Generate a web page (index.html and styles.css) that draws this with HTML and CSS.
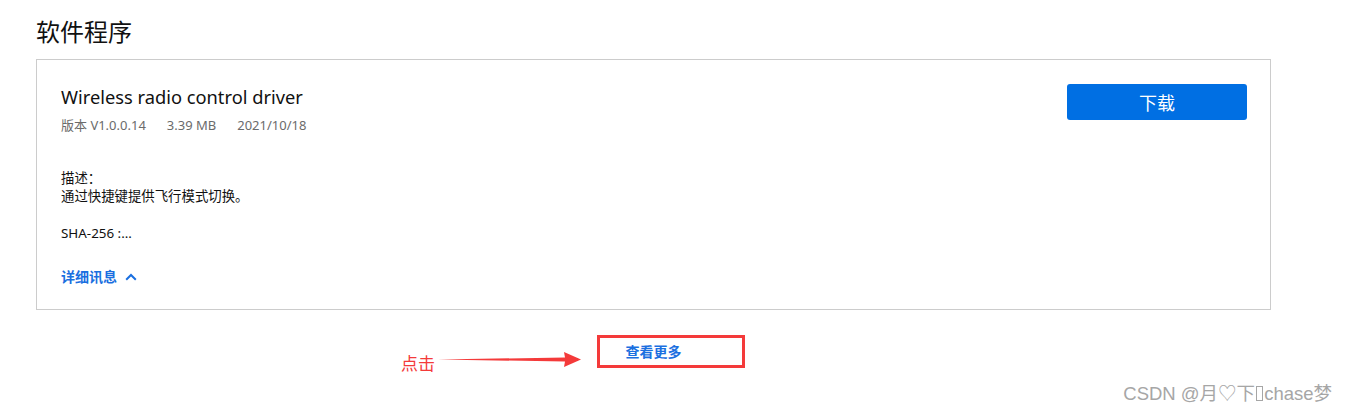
FILE: index.html
```html
<!DOCTYPE html>
<html lang="zh-CN">
<head>
<meta charset="utf-8">
<title>软件程序</title>
<link rel="stylesheet" href="styles.css">
</head>
<body>
<div class="page">
  <h2 class="section-title">软件程序</h2>
  <div class="card">
    <div class="card-head">
      <div class="info">
        <div class="name">Wireless radio control driver</div>
        <div class="meta"><span>版本 V1.0.0.14</span><span>3.39 MB</span><span>2021/10/18</span></div>
      </div>
      <button class="download">下载</button>
    </div>
    <div class="desc">
      <div>描述：</div>
      <div>通过快捷键提供飞行模式切换。</div>
    </div>
    <div class="sha">SHA-256 :...</div>
    <div class="details">详细讯息
      <svg class="chev" width="12" height="8" viewBox="0 0 12 8"><path d="M1.2 6.8 L6 2 L10.8 6.8" fill="none" stroke="#1a6fe0" stroke-width="2"/></svg>
    </div>
  </div>
  <div class="more-row">
    <span class="more">查看更多</span>
    <div class="annot">
      <span class="click">点击</span>
      <svg class="arrow" width="146" height="18" viewBox="0 0 146 18"><path d="M0 8.5 L127 6.5 L126 1 L143 8.5 L126 16 L127 10.5 Z" fill="#f43a3a"/></svg>
      <div class="redbox"></div>
    </div>
  </div>
  <div class="watermark">CSDN @月♡下<span class="tofu"></span>chase梦</div>
</div>
</body>
</html>
```
FILE: styles.css
```css
html, body {
  margin: 0;
  padding: 0;
  background: #fff;
}
body {
  font-family: "Noto Sans", "Noto Sans CJK SC", sans-serif;
  color: #222;
}
.page {
  position: relative;
  width: 1347px;
  height: 413px;
  padding: 0 0 0 36px;
  box-sizing: border-box;
}
.section-title {
  margin: 0;
  padding-top: 15px;
  height: 59px;
  box-sizing: border-box;
  font-size: 24px;
  line-height: 34px;
  font-weight: 400;
  color: #111;
}
.card {
  width: 1235px;
  box-sizing: border-box;
  border: 1px solid #cccccc;
  padding: 24px 23px 23px 24px;
}
.card-head {
  display: flex;
  justify-content: space-between;
  align-items: flex-start;
}
.name {
  font-size: 18.3px;
  line-height: 26px;
  color: #111;
}
.meta {
  margin-top: 5px;
  font-size: 13px;
  line-height: 20px;
  color: #6b6b6b;
  display: flex;
  gap: 21px;
}
.download {
  width: 180px;
  height: 36px;
  border: none;
  border-radius: 3px;
  background: #006fe3;
  color: #fff;
  font-family: "Noto Sans CJK SC", sans-serif;
  font-size: 18px;
  line-height: 36px;
  padding: 0;
  font-weight: 400;
}
.desc {
  margin-top: 34px;
  font-size: 13.4px;
  line-height: 18px;
  color: #111;
}
.sha {
  margin-top: 19px;
  font-size: 13.4px;
  line-height: 18px;
  color: #111;
}
.details {
  margin-top: 26px;
  font-size: 14px;
  line-height: 18px;
  font-weight: 700;
  color: #1a6fe0;
  display: flex;
  align-items: center;
  gap: 8px;
}
.chev {
  display: block;
}
.more-row {
  position: relative;
  width: 1235px;
  margin-top: 33px;
  display: flex;
  justify-content: center;
}
.more {
  font-size: 14px;
  line-height: 18px;
  font-weight: 700;
  color: #1a6fe0;
}
.annot {
  position: absolute;
  left: 0;
  top: 0;
}
.redbox {
  position: absolute;
  left: 561px;
  top: -8px;
  width: 148px;
  height: 33px;
  box-sizing: border-box;
  border: 3px solid #f43a3a;
}
.click {
  position: absolute;
  left: 365px;
  top: 9px;
  font-size: 17px;
  line-height: 24px;
  color: #f43a3a;
  white-space: nowrap;
}
.arrow {
  position: absolute;
  left: 402px;
  top: 8px;
}
.watermark {
  position: absolute;
  right: 15px;
  top: 382px;
  font-size: 18.5px;
  line-height: 24px;
  color: #a6a6a6;
  font-family: "Liberation Sans", "Noto Sans CJK SC", sans-serif;
  white-space: nowrap;
}
.tofu {
  display: inline-block;
  width: 5px;
  height: 13px;
  border: 1px solid #a6a6a6;
  margin: 0 1px;
  vertical-align: -1px;
}
```
